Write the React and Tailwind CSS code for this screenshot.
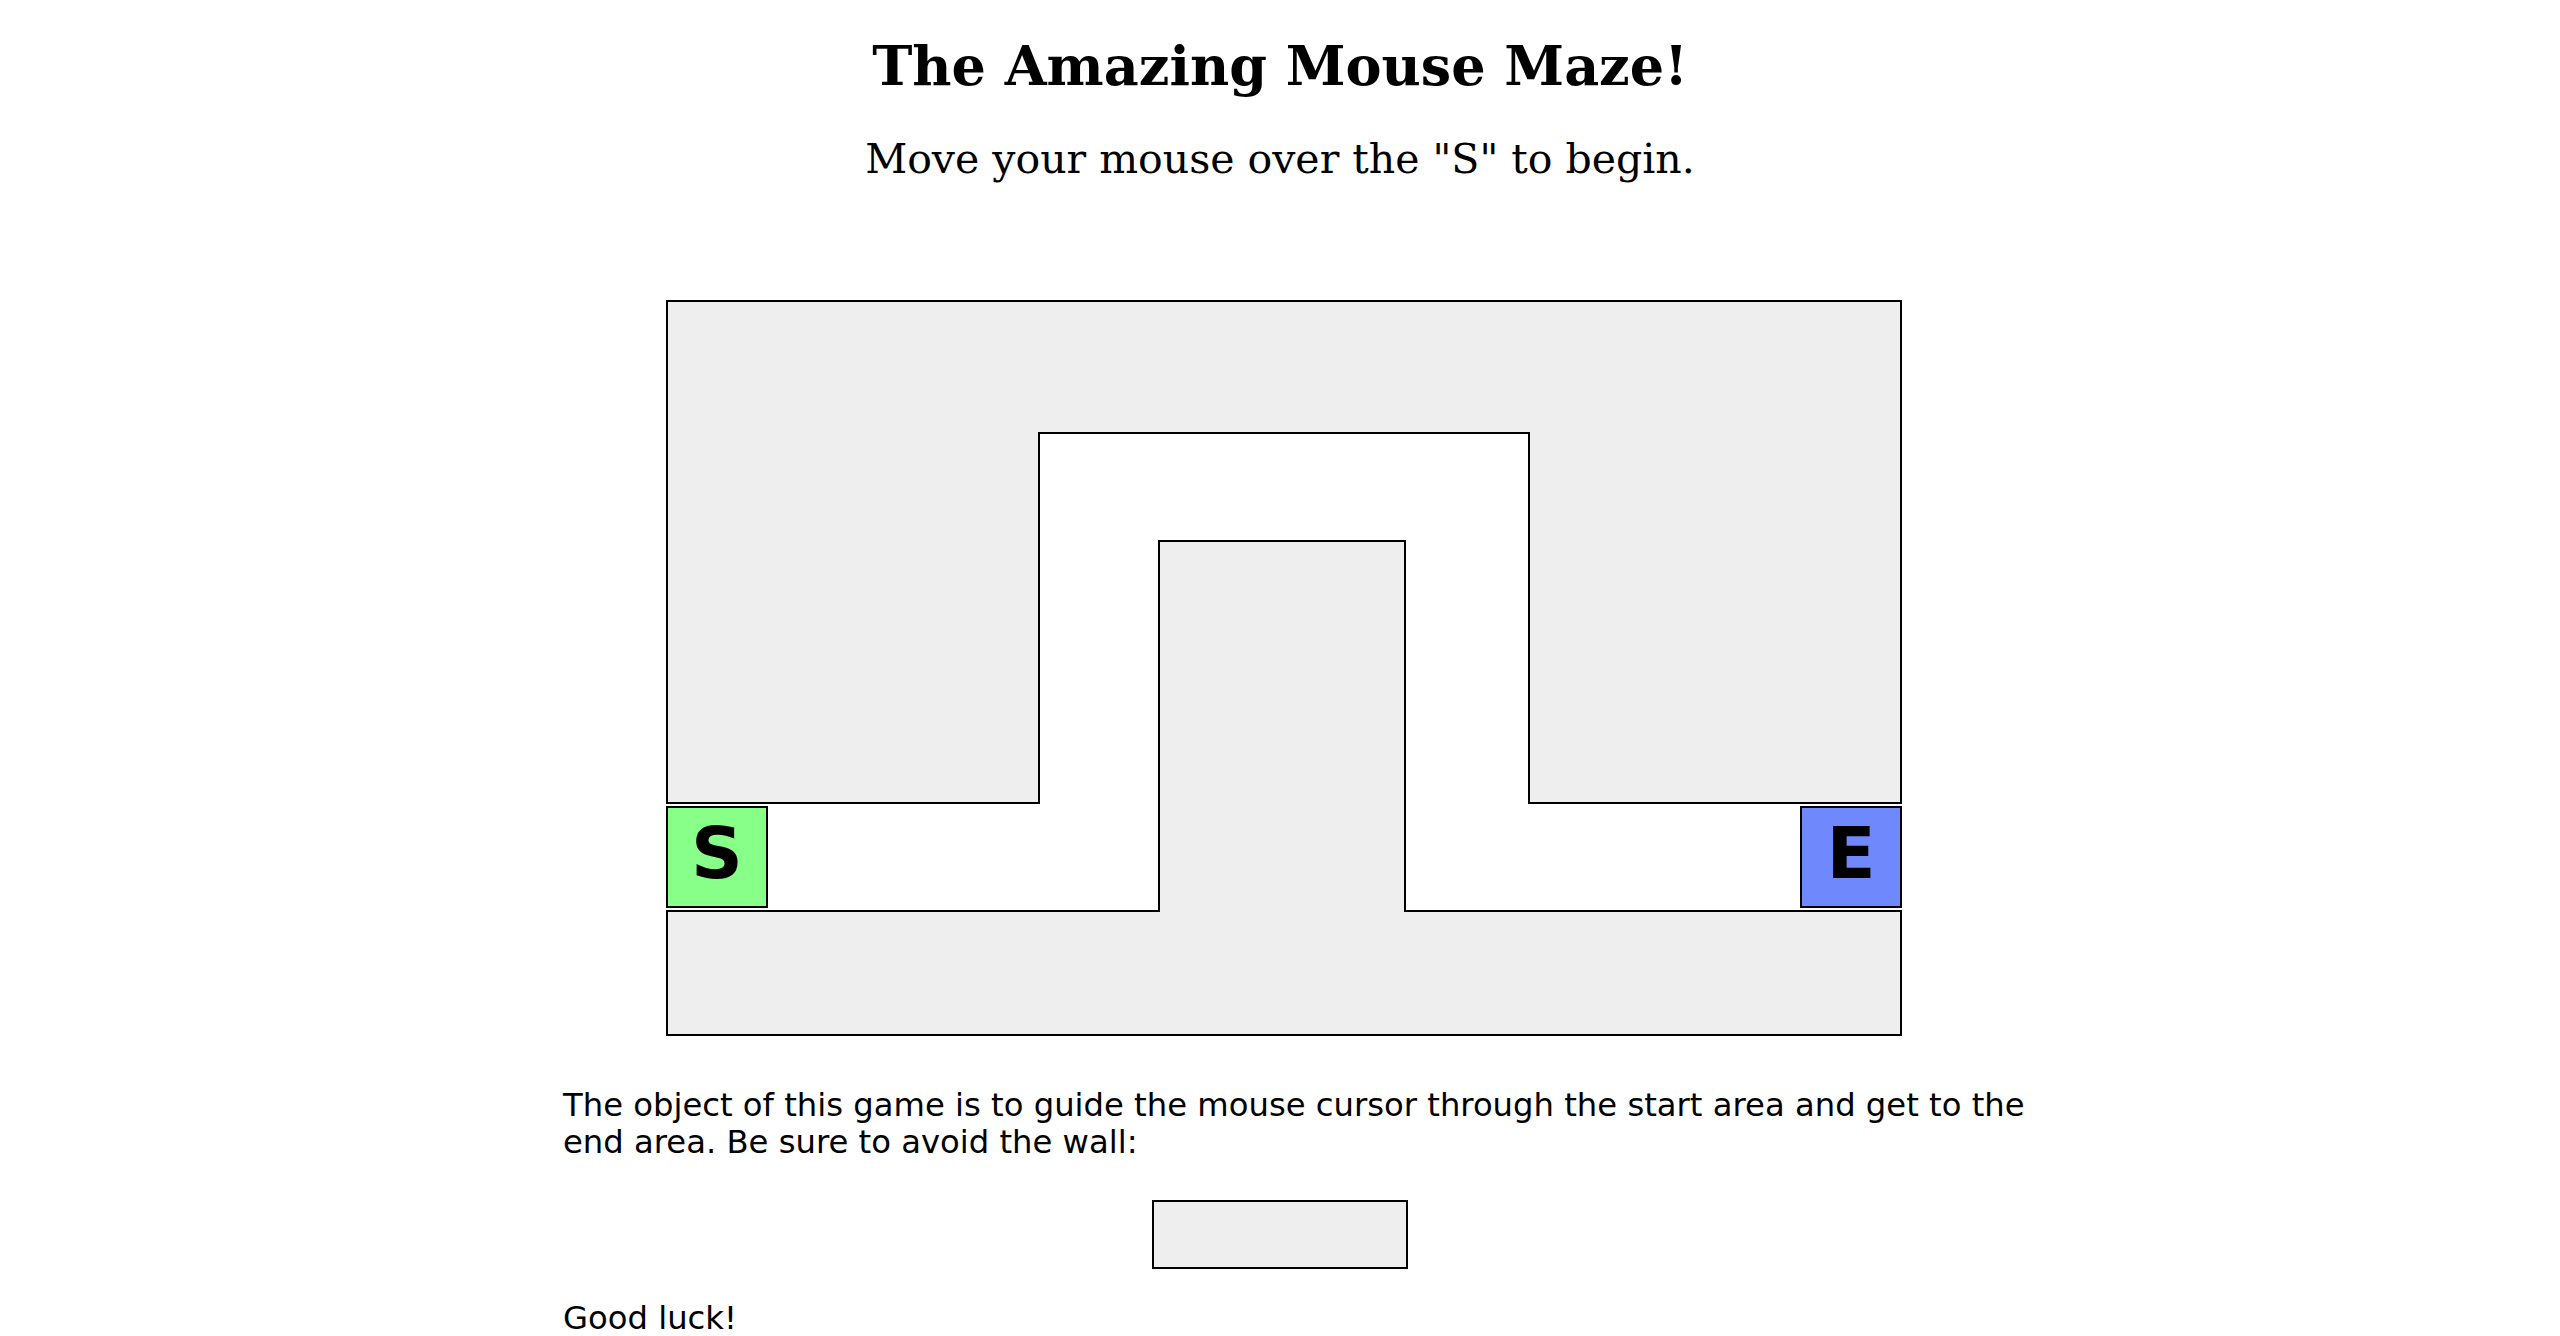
import React from 'react';

const serif = { fontFamily: '"DejaVu Serif", "Liberation Serif", serif' };

// maze walls, in the maze's own coordinates (stroke centred on the line)
const topWall = '1,1 1235,1 1235,503 863,503 863,133 373,133 373,503 1,503';
const bottomWall = '1,611 493,611 493,241 739,241 739,611 1235,611 1235,735 1,735';

const Maze = () => {
  return (
    <div className="relative ml-[8px] w-[1236px] h-[736px]">
      <svg width="1236" height="736" className="block" shapeRendering="crispEdges">
        <polygon points={topWall} fill="#eeeeee" stroke="#000" strokeWidth="2" />
        <polygon points={bottomWall} fill="#eeeeee" stroke="#000" strokeWidth="2" />
      </svg>
      <div className="absolute left-0 top-[506px] w-[102px] h-[102px] border-2 border-black bg-[#88ff88] flex items-center justify-center pb-[8px] font-['DejaVu_Sans',sans-serif] font-bold text-[72px] leading-none">
        S
      </div>
      <div className="absolute left-[1134px] top-[506px] w-[102px] h-[102px] border-2 border-black bg-[#6f88fc] flex items-center justify-center pb-[8px] font-['DejaVu_Sans',sans-serif] font-bold text-[72px] leading-none">
        E
      </div>
    </div>
  );
};

export default function App() {
  return (
    <div className="min-h-[1336px] bg-white text-black flex flex-col items-center">
      <h1 style={serif} className="mt-[39px] text-[54px] leading-none font-bold">
        The Amazing Mouse Maze!
      </h1>
      <h2 style={serif} className="mt-[46px] text-[41px] leading-none font-normal">
        Move your mouse over the "S" to begin.
      </h2>

      <div className="mt-[120px]">
        <Maze />
      </div>

      <div className="self-start ml-[563px] w-[1480px] font-['DejaVu_Sans',sans-serif] text-[32.25px] leading-[37px]">
        <p className="mt-[51px]">
          The object of this game is to guide the mouse cursor through the start area and get to the end area. Be sure to avoid the wall:
        </p>
        <div className="mt-[39px] ml-[589px] w-[256px] h-[69px] border-2 border-black bg-[#eeeeee]"></div>
        <p className="mt-[31px]">Good luck!</p>
      </div>
    </div>
  );
}
